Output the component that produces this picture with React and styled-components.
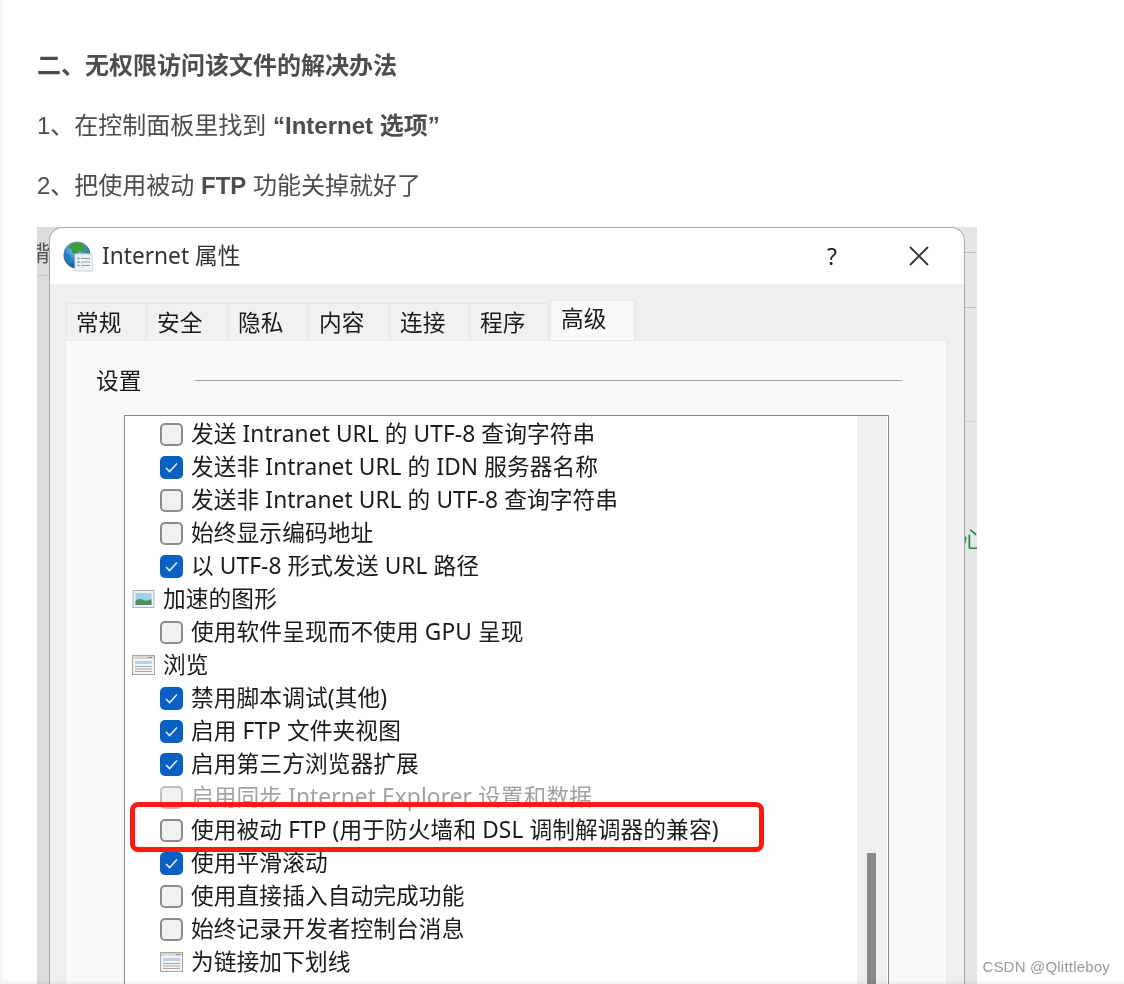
import React from 'react';
import styled, { createGlobalStyle } from 'styled-components';

const GlobalStyle = createGlobalStyle`
  html, body {
    margin: 0;
    padding: 0;
    background: #fff;
  }
`;

const Page = styled.div`
  position: relative;
  width: 1124px;
  height: 984px;
  box-sizing: border-box;
  padding: 48px 0 0 37px;
  border-left: 2px solid #f6f6f6;
  overflow: hidden;
  background: #fff;
  color: #4d4d4d;
  font-family: "Liberation Sans", "Noto Sans CJK SC", sans-serif;
  font-size: 24px;
  line-height: 36px;

  &::after {
    content: '';
    position: absolute;
    left: 0;
    right: 0;
    bottom: 0;
    height: 5px;
    background: linear-gradient(rgba(0, 0, 0, 0), rgba(0, 0, 0, 0.05));
  }
`;

const Article = styled.div`
  margin: 0 0 -1px -2px;
  filter: blur(0.35px);
`;

const Heading = styled.h2`
  margin: 0 0 24px;
  font-size: 24px;
  line-height: 36px;
  font-weight: bold;
`;

const Paragraph = styled.p`
  margin: 0 0 24px;
`;

const Shot = styled.div`
  position: relative;
  width: 940px;
  height: 757px;
  margin-left: -2px;
  box-sizing: border-box;
  padding: 1px 13px 0;
  overflow: hidden;
  background: linear-gradient(90deg, #dcdcdc, #e6e6e6);
  filter: blur(0.45px);
`;

const BackLine = styled.div`
  position: absolute;
  top: ${(p) => p.$top}px;
  ${(p) => (p.$side === 'left' ? 'left: 0;' : 'right: 0;')}
  width: 13px;
  height: 1px;
  background: ${(p) => p.$color || '#c4c4c4'};
`;

const TopMark = styled.div`
  position: absolute;
  top: 0;
  left: ${(p) => p.$left}px;
  width: ${(p) => p.$width}px;
  height: 1.5px;
  background: ${(p) => p.$color || '#333'};
`;

const BackGlyph = styled.span`
  position: absolute;
  top: ${(p) => p.$top}px;
  left: ${(p) => p.$left}px;
  font-family: "Noto Sans CJK SC", sans-serif;
  font-size: 22px;
  line-height: 26px;
  color: ${(p) => p.$color};
`;

const Dialog = styled.div`
  position: relative;
  height: 800px;
  border-radius: 13px 13px 0 0;
  background: #efefef;
  box-shadow: 0 0 0 1px #a8a8a8;
  overflow: hidden;
  color: #1a1a1a;
  font-family: "Noto Sans", "Noto Sans CJK SC", sans-serif;
  font-size: 22.7px;
`;

const TitleBar = styled.div`
  display: flex;
  align-items: center;
  height: 56px;
  padding: 0 35px 0 13px;
  background: #fff;
`;

const Title = styled.div`
  margin-left: 9px;
  font-size: 22.7px;
  color: #333;
  flex: 1;
`;

const HelpButton = styled.div`
  width: 20px;
  margin-right: 67px;
  text-align: center;
  font-size: 23px;
  color: #222;
`;

const CloseButton = styled.svg`
  width: 20px;
  height: 20px;
  display: block;
`;

const Body = styled.div`
  padding: 16px 16px 0 15px;
`;

const Tabs = styled.div`
  display: flex;
  height: 40px;
  padding-left: 1px;
  align-items: flex-end;
`;

const Tab = styled.div`
  box-sizing: border-box;
  width: ${(p) => p.$width}px;
  height: ${(p) => (p.$active ? 40 : 37)}px;
  margin-right: ${(p) => (p.$active ? 0 : 1)}px;
  padding-left: ${(p) => (p.$active ? 10 : 9)}px;
  line-height: ${(p) => (p.$active ? 35 : 37)}px;
  background: ${(p) => (p.$active ? '#f9f9f9' : '#f1f1f1')};
  border: 1px solid #e6e6e6;
  border-bottom: none;
`;

const Panel = styled.div`
  height: 700px;
  width: 882px;
  box-sizing: border-box;
  padding: 22px 0 0 30px;
  background: #f9f9f9;
  border: 1px solid #e9e9e9;
`;

const Legend = styled.div`
  display: flex;
  align-items: center;
  height: 36px;
  margin-bottom: 16px;
`;

const LegendLabel = styled.span`
  width: 99px;
`;

const LegendRule = styled.div`
  width: 707px;
  height: 1.5px;
  background: #a0a0a0;
  margin-top: -1px;
`;

const ListBox = styled.div`
  display: flex;
  width: 765px;
  height: 640px;
  margin-left: 28px;
  box-sizing: border-box;
  background: #fff;
  border: 1.5px solid #8a8a8a;
`;

const Rows = styled.div`
  flex: 1;
  padding-top: 2px;
`;

const Row = styled.div`
  display: flex;
  align-items: center;
  gap: 8px;
  height: 33px;
  padding-left: ${(p) => (p.$section ? 7 : 35)}px;
  white-space: nowrap;
  color: ${(p) => (p.$disabled ? '#a2a2a2' : '#1a1a1a')};
`;

const Check = styled.div`
  display: flex;
  align-items: center;
  justify-content: center;
  flex: none;
  width: 23px;
  height: 23px;
  box-sizing: border-box;
  border-radius: 5px;
  background: ${(p) => (p.$on ? '#0a60c2' : '#f1f1f1')};
  border: ${(p) => (p.$on ? 'none' : `2px solid ${p.$disabled ? '#c0c0c0' : '#8c8c8c'}`)};
`;

const RowIcon = styled.svg`
  flex: none;
  width: 23px;
  height: 23px;
  display: block;
`;

const RowText = styled.span`
  letter-spacing: 0.1px;
  margin-top: -1px;
`;

const ScrollTrack = styled.div`
  flex: none;
  width: 30px;
  margin-right: 1px;
  box-sizing: border-box;
  padding: 437px 0 0 10px;
  background: #efefef;
`;

const ScrollThumb = styled.div`
  width: 9px;
  height: 200px;
  background: #8a8a8a;
`;

const Highlight = styled.div`
  position: absolute;
  left: 93px;
  top: 575px;
  width: 634px;
  height: 50px;
  box-sizing: border-box;
  border: 5px solid #ff1a10;
  border-radius: 8px;
`;

const Watermark = styled.div`
  position: absolute;
  right: 14px;
  bottom: 8px;
  font-size: 15px;
  letter-spacing: 0.2px;
  line-height: 18px;
  color: #999;
  filter: blur(0.3px);
`;

const GlobeSvg = styled.svg`
  flex: none;
  width: 30px;
  height: 31px;
  display: block;
`;

const GlobeIcon = () => (
  <GlobeSvg viewBox="0 0 30 31">
    <defs>
      <radialGradient id="sea" cx="0.45" cy="0.25" r="0.85">
        <stop offset="0" stopColor="#8fd0f0" />
        <stop offset="0.5" stopColor="#2d86cc" />
        <stop offset="1" stopColor="#0b3f86" />
      </radialGradient>
    </defs>
    <circle cx="14" cy="14" r="13.5" fill="url(#sea)" />
    <path d="M8 3c4-2 9-2 12 0l3 4-3 4-4-1-2 4-4-1-2-5-3-1z" fill="#3f9a3c" />
    <path d="M2 12l4 2 2 5-2 4c-3-3-4-7-4-11z" fill="#2f7fae" />
    <path d="M22 11l4 0c1 2 1 4 0 6l-3-2z" fill="#3c9c47" />
    <rect x="12" y="13" width="18" height="17" fill="#eef2f5" stroke="#ccd3d9" />
    <path d="M18 17.5h9M18 21h9M18 24.5h9" stroke="#8d9cab" strokeWidth="1.2" />
    <path d="M14.5 17.5h2M14.5 21h2M14.5 24.5h2" stroke="#4d96c9" strokeWidth="1.4" />
  </GlobeSvg>
);

const PictureIcon = () => (
  <RowIcon viewBox="0 0 23 23">
    <rect x="1" y="2.5" width="21" height="17" fill="#eef2f5" stroke="#a8b0b8" />
    <rect x="3.5" y="5" width="16" height="12" fill="#9fd0e8" />
    <path d="M3.5 17v-4c4-3 6-2 8-1s5 1 8-1v6z" fill="#4c8f62" />
  </RowIcon>
);

const ListIcon = () => (
  <RowIcon viewBox="0 0 23 23">
    <rect x="0.5" y="1.5" width="22" height="19" fill="#f3f3f3" stroke="#a4a4a4" />
    <rect x="1" y="2" width="21" height="3" fill="#d8d8d8" />
    <path d="M16 3.5h1.5M18.5 3.5H20" stroke="#777" strokeWidth="1" />
    <rect x="3" y="7" width="17" height="3" fill="#b9d3ee" />
    <path d="M3 12.5h17M3 15h17M3 17.5h17" stroke="#a9a9a9" strokeWidth="1" />
  </RowIcon>
);

const TickIcon = () => (
  <svg width="13" height="11" viewBox="0 0 13 11">
    <path d="M1 6l3.6 3.6L12 1.6" fill="none" stroke="#e8f0fa" strokeWidth="1.5" />
  </svg>
);

const tabs = [
  { label: '常规', width: 80 },
  { label: '安全', width: 80 },
  { label: '隐私', width: 80 },
  { label: '内容', width: 80 },
  { label: '连接', width: 79 },
  { label: '程序', width: 79 },
  { label: '高级', width: 85, active: true },
];

const rows = [
  { text: '发送 Intranet URL 的 UTF-8 查询字符串' },
  { text: '发送非 Intranet URL 的 IDN 服务器名称', on: true },
  { text: '发送非 Intranet URL 的 UTF-8 查询字符串' },
  { text: '始终显示编码地址' },
  { text: '以 UTF-8 形式发送 URL 路径', on: true },
  { text: '加速的图形', section: true, icon: <PictureIcon /> },
  { text: '使用软件呈现而不使用 GPU 呈现' },
  { text: '浏览', section: true, icon: <ListIcon /> },
  { text: '禁用脚本调试(其他)', on: true },
  { text: '启用 FTP 文件夹视图', on: true },
  { text: '启用第三方浏览器扩展', on: true },
  { text: '启用同步 Internet Explorer 设置和数据', disabled: true },
  { text: '使用被动 FTP (用于防火墙和 DSL 调制解调器的兼容)' },
  { text: '使用平滑滚动', on: true },
  { text: '使用直接插入自动完成功能' },
  { text: '始终记录开发者控制台消息' },
  { text: '为链接加下划线', icon: <ListIcon /> },
];

const topMarks = [
  { left: 140, width: 1 },
  { left: 200, width: 1 },
  { left: 275, width: 1 },
  { left: 385, width: 1 },
  { left: 505, width: 30, color: '#2b7fc0' },
  { left: 575, width: 24 },
  { left: 606, width: 52, color: '#666' },
  { left: 705, width: 30, color: '#888' },
  { left: 735, width: 28 },
  { left: 765, width: 95, color: '#888' },
];

const App = () => (
  <Page>
    <GlobalStyle />
    <Article>
      <Heading>二、无权限访问该文件的解决办法</Heading>
      <Paragraph>
        1、在控制面板里找到 <strong>“Internet 选项”</strong>
      </Paragraph>
      <Paragraph>
        2、把使用被动 <strong>FTP</strong> 功能关掉就好了
      </Paragraph>
    </Article>
    <Shot>
      <BackLine $side="left" $top={48} />
      <BackLine $side="right" $top={25} />
      <BackLine $side="right" $top={80} />
      <BackLine $side="right" $top={194} $color="#c6d4e2" />
      {topMarks.map((m) => (
        <TopMark key={m.left} $left={m.left} $width={m.width} $color={m.color} />
      ))}
      <BackGlyph $top={11} $left={-9} $color="#555">揹</BackGlyph>
      <BackGlyph $top={297} $left={925} $color="#1f8a3c">心</BackGlyph>
      <Dialog>
        <TitleBar>
          <GlobeIcon />
          <Title>Internet 属性</Title>
          <HelpButton>?</HelpButton>
          <CloseButton viewBox="0 0 20 20">
            <path d="M1 1l18 18M19 1L1 19" stroke="#333" strokeWidth="1.8" fill="none" />
          </CloseButton>
        </TitleBar>
        <Body>
          <Tabs>
            {tabs.map((t) => (
              <Tab key={t.label} $width={t.width} $active={t.active}>{t.label}</Tab>
            ))}
          </Tabs>
          <Panel>
            <Legend>
              <LegendLabel>设置</LegendLabel>
              <LegendRule />
            </Legend>
            <ListBox>
              <Rows>
                {rows.map((r) => (
                  <Row key={r.text} $section={r.section} $disabled={r.disabled}>
                    {r.icon || (
                      <Check $on={r.on} $disabled={r.disabled}>{r.on && <TickIcon />}</Check>
                    )}
                    <RowText>{r.text}</RowText>
                  </Row>
                ))}
              </Rows>
              <ScrollTrack>
                <ScrollThumb />
              </ScrollTrack>
            </ListBox>
          </Panel>
        </Body>
      </Dialog>
      <Highlight />
    </Shot>
    <Watermark>CSDN @Qlittleboy</Watermark>
  </Page>
);

export default App;
